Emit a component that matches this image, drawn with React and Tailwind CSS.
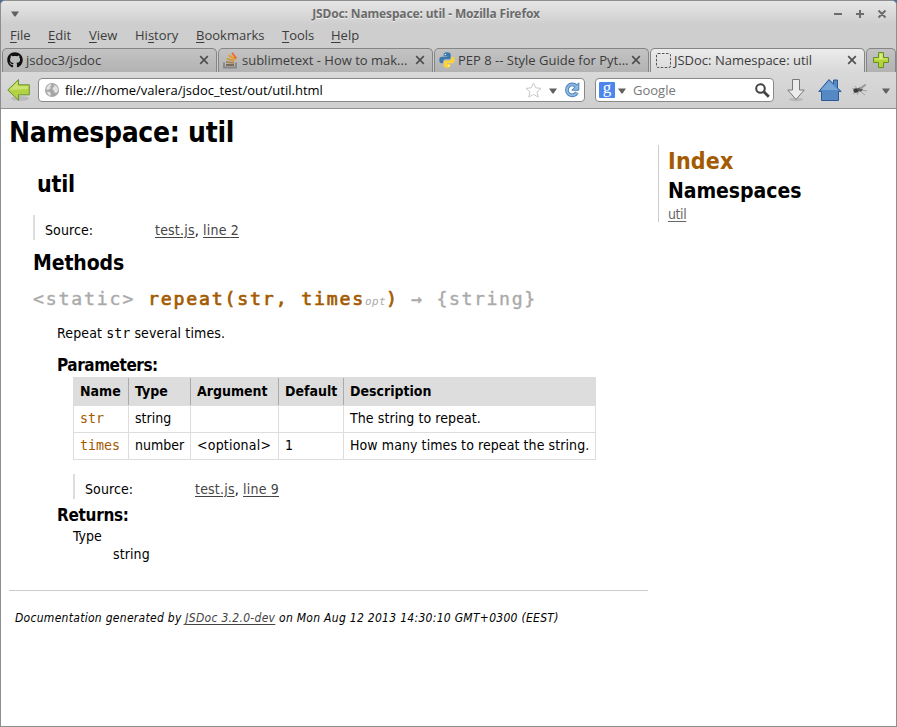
import React from "react";
import { FaGithub } from "react-icons/fa";

const Caret = ({ className = "" }) => (
  <svg className={className} width="8" height="6" viewBox="0 0 8 6">
    <path d="M0 .5h8L4.500 5.500h-1z" fill="#606060" />
  </svg>
);

const Close = ({ className = "" }) => (
  <svg className={className} width="10" height="10" viewBox="0 0 10 10">
    <path d="M1.200 1.200l7.600 7.600M8.800 1.200L1.200 8.800" stroke="#505050" strokeWidth="1.700" />
  </svg>
);

const menus = [
  ["F", "ile", "", "w-[38px]"],
  ["E", "dit", "", "w-[41px]"],
  ["V", "iew", "", "w-[46px]"],
  ["s", "tory", "Hi", "w-[61px]"],
  ["B", "ookmarks", "", "w-[86px]"],
  ["T", "ools", "", "w-[49px]"],
  ["H", "elp", "", "w-[40px]"],
];

function TitleBar() {
  return (
    <div className="flex h-[25px] items-center">
      <Caret className="ml-[10px] mt-[1px]" />
      <div className="grow text-center font-['Noto_Sans',sans-serif] text-[12px] font-bold leading-[24px] tracking-[-0.14px] text-[#6b6b6b] [text-shadow:0_1px_0_#eee]">
        JSDoc: Namespace: util - Mozilla Firefox
      </div>
      <svg className="mr-[9px]" width="54" height="12" viewBox="0 0 54 12" stroke="#6c6c6c" strokeWidth="2" fill="none">
        <path d="M1 6h8M23 6h8M27 2v8M45.500 2.500l7 7M52.500 2.500l-7 7" />
      </svg>
    </div>
  );
}

function MenuBar() {
  return (
    <div className="flex h-[22px] pl-[9px] text-[13px] leading-[18px] text-[#3c3c3c]">
      {menus.map(([key, rest, pre, width]) => (
        <div key={rest} className={width}>
          {pre}
          <span className="underline underline-offset-2">{key}</span>
          {rest}
        </div>
      ))}
    </div>
  );
}

const StackIcon = () => (
  <svg width="16" height="17" viewBox="0 0 16 17" fill="none">
    <path d="M1 10.500v5h12v-5" stroke="#85868a" strokeWidth="1.800" />
    <path d="M3 13h8" stroke="#7b6b58" strokeWidth="1.800" />
    <path d="M3 10l8 .8" stroke="#a68552" strokeWidth="1.800" />
    <path d="M3.800 6.600l7.600 2.200" stroke="#d19a38" strokeWidth="1.800" />
    <path d="M5.600 3.200l6.600 4" stroke="#f09a1c" strokeWidth="1.800" />
    <path d="M9 .8l4.400 5.800" stroke="#f2682a" strokeWidth="1.800" />
  </svg>
);

const PythonIcon = () => (
  <svg width="16" height="16" viewBox="0 0 16 16">
    <path d="M8 .3C5 .3 4.700 1.400 4.700 2.500V4.200h3.500v.6H3C1.200 4.800.3 6 .3 8s1 3.300 2.400 3.300h1.500V9.500c0-1.300 1-2.200 2.200-2.200h3.400c1.200 0 1.900-.9 1.900-1.900V2.500C11.700 1 10 .3 8 .3z" fill="#3b78ab" />
    <path d="M8 15.800c3 0 3.400-1.100 3.400-2.200v-1.700H7.900v-.6h5.100c1.800 0 2.700-1.200 2.700-3.200s-1-3.300-2.400-3.300h-1v1.700c0 1.300-1 2.200-2.200 2.200H6.600c-1.200 0-1.900.9-1.900 1.900v3c0 1.500 1.400 2.200 3.300 2.200z" fill="#fbd43a" />
    <circle cx="6.300" cy="2.500" r=".7" fill="#fff" />
    <circle cx="9.700" cy="13.700" r=".7" fill="#fff" />
  </svg>
);

function Tab({ icon, label, active, className }) {
  return (
    <div
      className={`flex h-full w-[215px] items-center rounded-t-[5px] border border-b-0 border-[#858585] pb-[1px] ${
        active ? "bg-linear-to-b from-[#ececec] to-[#d9d9d9]" : "bg-linear-to-b from-[#c3c3c3] to-[#b2b2b2]"
      } ${className}`}
    >
      <span className="flex w-[16px] shrink-0 justify-center">{icon}</span>
      <span className="ml-[3px] grow whitespace-nowrap leading-[22px]">{label}</span>
      <Close className="mr-[7px] shrink-0" />
    </div>
  );
}

function TabBar() {
  return (
    <div className="flex h-[24px] pl-[1px] text-[13px] text-[#3c3c3c]">
      <Tab className="pl-[4px]" icon={<FaGithub size={16} color="#111" />} label="jsdoc3/jsdoc" />
      <Tab className="ml-[1px] pl-[4px]" icon={<StackIcon />} label="sublimetext - How to mak..." />
      <Tab className="ml-[1px] pl-[4px]" icon={<PythonIcon />} label="PEP 8 -- Style Guide for Pyt..." />
      <Tab
        active
        className="ml-[1px] pl-[4px]"
        icon={
          <svg width="15" height="15" viewBox="0 0 15 15">
            <rect x=".5" y=".5" width="14" height="14" rx="1.500" fill="none" stroke="#555" strokeDasharray="2.500 1.500" />
          </svg>
        }
        label="JSDoc: Namespace: util"
      />
      <div className="ml-[1px] flex w-[30px] items-center justify-center rounded-t-[5px] border border-b-0 border-[#858585] bg-linear-to-b from-[#c3c3c3] to-[#b2b2b2] pb-[1px]">
        <svg width="16" height="16" viewBox="0 0 16 16">
          <path d="M5.500.5h5v5h5v5h-5v5h-5v-5h-5v-5h5z" fill="#b4d335" stroke="#64902a" />
          <path d="M6.500 1.500h3v5h5v1H1.500v-1h5z" fill="#d9ec7e" />
        </svg>
      </div>
    </div>
  );
}

const GlobeIcon = () => (
  <svg width="16" height="16" viewBox="0 0 16 16">
    <circle cx="8" cy="8" r="7" fill="#a6a6a6" />
    <path d="M2.500 5.500C3.500 3.500 5 2.300 7 2l.5 1.500L6 4.500l1 1.500-2 1.500-2.500.5zM3 9.500l3 .5 1 2-1 2C4.500 13.300 3.300 11.700 3 9.500zM9.500 2.500l3.500 2L14.200 8l-1.700 3-2-.5-.5-2-1.500-1 .5-2 1.500-1z" fill="#e2e2e2" />
  </svg>
);

function Toolbar() {
  return (
    <div className="flex h-[36px] items-center bg-linear-to-b from-[#d9d9d9] to-[#cfcfcf] pl-[6px] text-[13px]">
      <svg width="24" height="24" viewBox="0 0 24 24">
        <ellipse cx="13" cy="20.500" rx="9" ry="2.500" fill="#aaa" opacity=".6" />
        <path d="M.8 12L11.500 1.500v5.300h10.800v10H11.500v5.400z" fill="#b3d243" stroke="#6c9530" strokeLinejoin="round" />
        <path d="M2.500 12l8-8v4h10.700v3z" fill="#cce373" />
      </svg>
      <div className="ml-[7px] flex h-[24px] w-[547px] items-center rounded-[4px] border border-[#888] bg-white pl-[5px]">
        <GlobeIcon />
        <span className="ml-[5px] grow leading-[22px] text-black">file:///home/valera/jsdoc_test/out/util.html</span>
        <svg width="17" height="16" viewBox="0 0 17 16">
          <path d="M8.500 1l2.200 4.800 5.300.6-4 3.500 1.200 5.200-4.700-2.700-4.700 2.700L5 9.900 1 6.400l5.300-.6z" fill="#fff" stroke="#c8c8c8" />
        </svg>
        <Caret className="ml-[7px] mt-[2px]" />
        <svg className="ml-[7px] mr-[4px]" width="16" height="16" viewBox="0 0 16 16">
          <path d="M12.500 4.500A5.400 5.400 0 1 0 13 10.500" fill="none" stroke="#4a80b8" strokeWidth="3.800" />
          <path d="M14.800.8v7.400H7.800z" fill="#8db8e2" stroke="#4a80b8" />
          <path d="M12.500 4.500A5.400 5.400 0 1 0 13 10.500" fill="none" stroke="#8db8e2" strokeWidth="2" />
        </svg>
      </div>
      <div className="ml-[10px] flex h-[24px] w-[179px] items-center rounded-[4px] border border-[#888] bg-white pl-[3px]">
        <span className="h-[16px] w-[16px] rounded-[1px] bg-[#4a86ee] text-center font-['Liberation_Serif',serif] text-[17px] leading-[12px] text-white">
          g
        </span>
        <Caret className="ml-[3px] mt-[2px]" />
        <span className="ml-[7px] grow leading-[22px] text-[#777]">Google</span>
        <svg className="mr-[3px]" width="15" height="15" viewBox="0 0 15 15" fill="none" stroke="#444">
          <circle cx="5.500" cy="5.500" r="4.300" strokeWidth="2" />
          <path d="M8.800 8.800l5 5" strokeWidth="2.800" />
        </svg>
      </div>
      <svg className="ml-[13px]" width="18" height="24" viewBox="0 0 18 24">
        <ellipse cx="9" cy="21.500" rx="7" ry="1.800" fill="#aaa" opacity=".6" />
        <path d="M5.500 1.500h7v10.500h4.700L9 21.500.8 12h4.700z" fill="#ececec" stroke="#777" strokeLinejoin="round" />
      </svg>
      <svg className="ml-[13px]" width="24" height="24" viewBox="0 0 24 24">
        <path d="M11 1.500l4.500 4.500V2h4v8l3.700 3.500h-2.700v9h-17v-9H.8z" fill="#5489c6" stroke="#2b5a97" strokeLinejoin="round" />
        <path d="M11 3L3 12h17z" fill="#78a5d8" />
      </svg>
      <svg className="ml-[9px]" width="17" height="14" viewBox="0 0 17 14">
        <g stroke="#888" strokeWidth=".7">
          <path d="M1 5l5 3M2 11l4-3M6 12l2-4M9 8l5 4M11 7l5 1M4 3l3 4M11 5l4-4" />
        </g>
        <ellipse cx="5" cy="7.500" rx="2.600" ry="2.300" fill="#3c3c3c" />
        <ellipse cx="9" cy="6.500" rx="2.600" ry="1.900" fill="#555" />
        <path d="M8 5l6-4 1 1.500-5 4z" fill="#999" />
      </svg>
      <Caret className="ml-[14px] mt-[2px]" />
    </div>
  );
}

const Link = ({ children }) => <a className="text-[#444] underline underline-offset-2">{children}</a>;

const Source = ({ line, className }) => (
  <div className={`flex h-[25px] border-l-2 border-[#ddd] pl-[10px] leading-[30px] ${className}`}>
    <div className="w-[110px] tracking-[0.1px]">Source:</div>
    <div className="tracking-[0.2px]">
      <Link>test.js</Link>, <Link>line {line}</Link>
    </div>
  </div>
);

const columns = [
  ["Name", "w-[55px]"],
  ["Type", "w-[62px]"],
  ["Argument", "w-[88px]"],
  ["Default", "w-[65px]"],
  ["Description", "w-[252px]"],
];
const rows = [
  ["str", "string", "", "", "The string to repeat."],
  ["times", "number", "<optional>", "1", "How many times to repeat the string."],
];

function Params() {
  return (
    <div className="ml-[64px] w-[523px] border-r border-[#ddd]">
      <div className="flex h-[28px] bg-[#ddd] pt-[1px] font-bold leading-[27px]">
        {columns.map(([label, width], i) => (
          <div key={label} className={`${width} border-l pl-[6px] ${i ? "border-[#aaa]" : "border-[#ddd]"}`}>
            {label}
          </div>
        ))}
      </div>
      {rows.map((row, r) => (
        <div key={row[0]} className={`flex border-b border-[#ddd] ${r ? "h-[27px]" : "h-[28px] border-t"}`}>
          {row.map((cell, i) => (
            <div
              key={i}
              className={`${columns[i][1]} whitespace-nowrap border-l border-[#ddd] pl-[6px] ${
                i
                  ? `leading-[24px] ${i === 2 ? "tracking-[0.2px]" : i === 4 ? "tracking-[0.08px]" : ""}`
                  : "font-['DejaVu_Sans_Mono',monospace] text-[13.33px] leading-[26px] text-[#a35a00]"
              }`}
            >
              {cell}
            </div>
          ))}
        </div>
      ))}
    </div>
  );
}

function Main() {
  return (
    <main className="w-[639px]">
      <h1 className="mt-[4px] h-[40px] text-[28px] font-bold leading-[40px] tracking-[-0.3px]">Namespace: util</h1>
      <h2 className="ml-[28px] mt-[16px] h-[30px] text-[23px] font-bold leading-[30px] tracking-[-0.2px]">util</h2>
      <Source line="2" className="ml-[24px] mt-[16px]" />
      <h3 className="ml-[24px] mt-[8px] h-[30px] text-[21px] font-bold leading-[30px] tracking-[-0.1px]">Methods</h3>
      <h4 className="ml-[24px] mt-[6px] h-[30px] whitespace-nowrap font-['DejaVu_Sans_Mono',monospace] text-[18.2px] font-normal leading-[30px] tracking-[1.82px] text-[#a35a00] [-webkit-text-stroke:0.7px]">
        <span className="text-[#aaa] [-webkit-text-stroke:0.4px]">&lt;static&gt; </span>
        repeat(str, times
        <span className="text-[10.92px] italic tracking-[0.4px] text-[#aaa] [-webkit-text-stroke:0]">opt</span>)
        <span className="tracking-[1.6px] text-[#aaa] [-webkit-text-stroke:0.4px]"> → {"{string}"}</span>
      </h4>
      <p className="ml-[48px] mt-[9px] h-[20px] leading-[20px] tracking-[0.13px]">
        Repeat <code className="font-['DejaVu_Sans_Mono',monospace] text-[13.33px] tracking-normal">str</code> several times.
      </p>
      <h5 className="ml-[48px] mt-[12px] h-[22px] text-[17px] font-bold leading-[20px] tracking-[-0.45px]">Parameters:</h5>
      <Params />
      <Source line="9" className="ml-[64px] mt-[14px]" />
      <h5 className="ml-[48px] mt-[6px] h-[20px] text-[17px] font-bold leading-[20px] tracking-[-0.3px]">Returns:</h5>
      <div className="ml-[64px] mt-[2px] h-[18px] leading-[18px]">Type</div>
      <div className="ml-[104px] h-[18px] leading-[18px] tracking-[0.1px]">string</div>
      <footer className="mt-[27px] border-t border-[#ccc] pl-[6px] pt-[17px] text-[12px] italic leading-[20px] tracking-[0.29px]">
        Documentation generated by <Link>JSDoc 3.2.0-dev</Link> on Mon Aug 12 2013 14:30:10 GMT+0300 (EEST)
      </footer>
    </main>
  );
}

export default function App() {
  return (
    <div className="h-[727px] w-[897px] bg-[#4a6f96]">
      <div className="flex h-[727px] flex-col overflow-hidden rounded-t-[5px] border border-[#8e8e8e] bg-[#cecece] font-['Open_Sans',sans-serif]">
        <div className="h-[47px] bg-linear-to-b from-[#e6e6e6] to-[#cecece] to-50%">
          <TitleBar />
          <MenuBar />
        </div>
        <TabBar />
        <Toolbar />
        <div className="flex grow border-t border-[#929292] bg-white pl-[8px] font-['DejaVu_Sans_Condensed','DejaVu_Sans',sans-serif] text-[14px] text-black">
          <Main />
          <nav className="ml-[10px] mt-[36px] h-[77px] border-l border-[#ccc] pl-[9px]">
            <h2 className="h-[32px] text-[23px] font-bold leading-[32px] tracking-[0.2px] text-[#a35a00]">Index</h2>
            <h3 className="h-[28px] text-[21px] font-bold leading-[28px] tracking-[-0.05px]">Namespaces</h3>
            <div className="leading-[18px] tracking-[-0.4px]">
              <a className="text-[#666] underline underline-offset-2">util</a>
            </div>
          </nav>
        </div>
      </div>
    </div>
  );
}
